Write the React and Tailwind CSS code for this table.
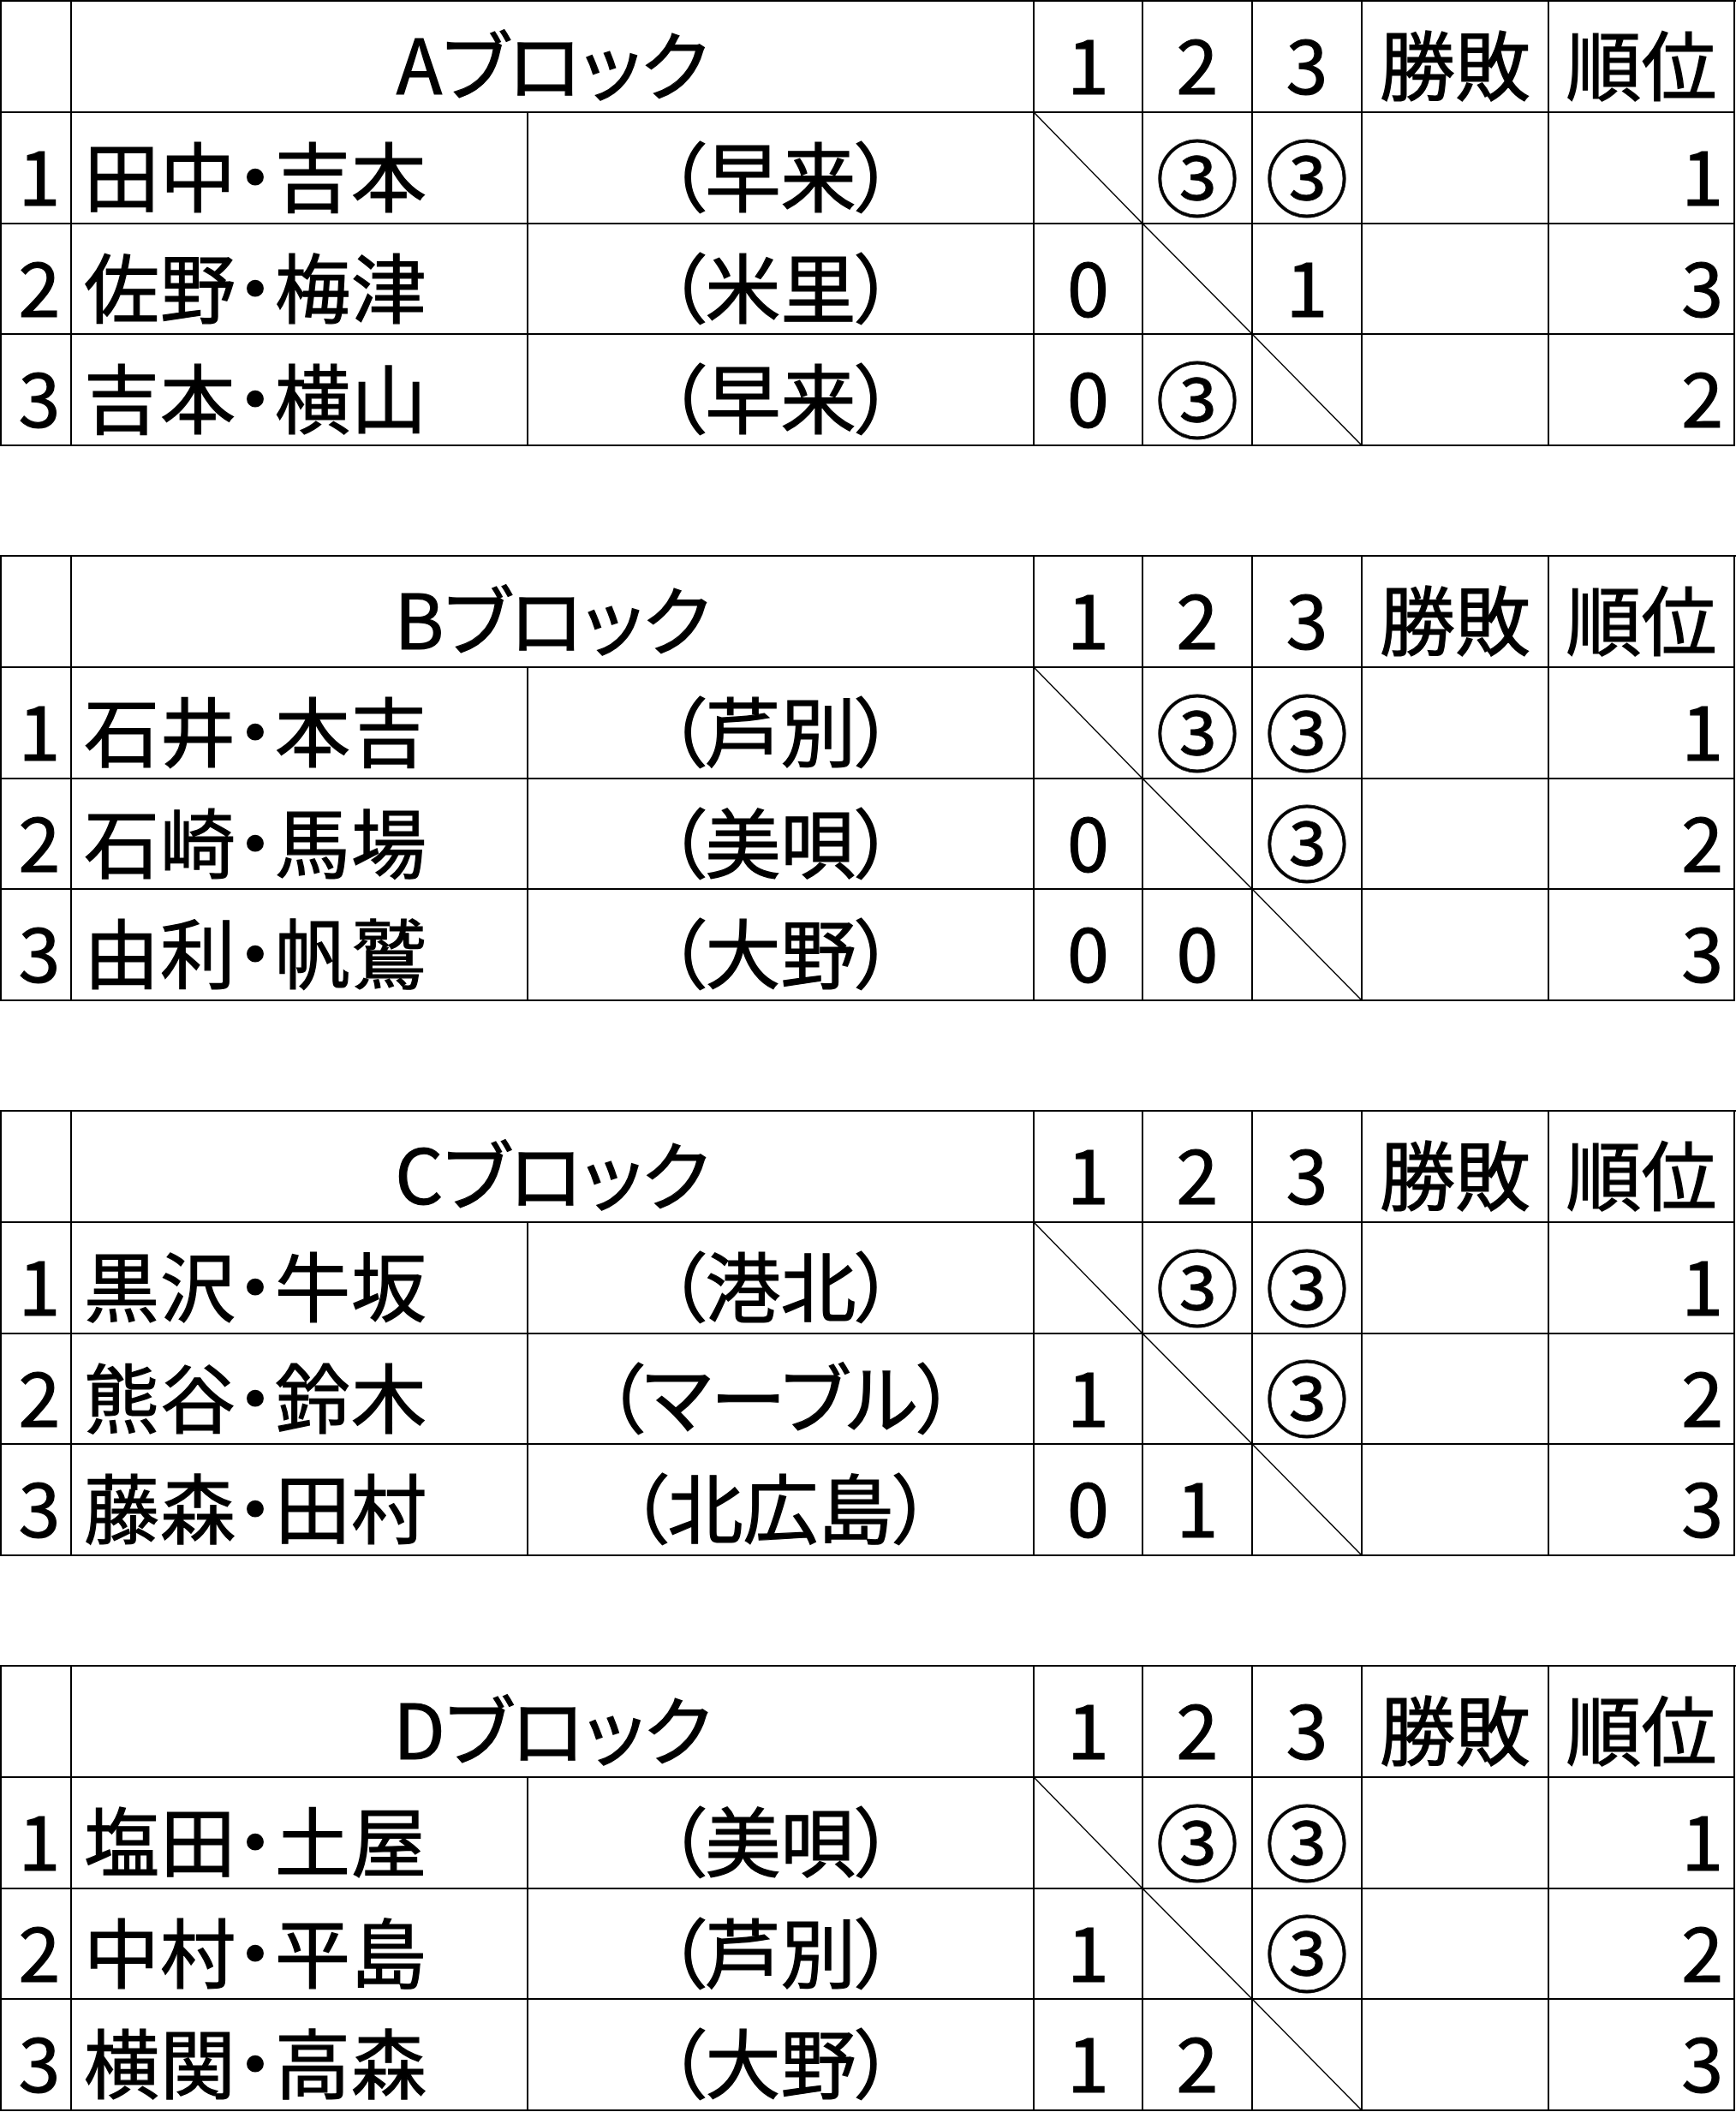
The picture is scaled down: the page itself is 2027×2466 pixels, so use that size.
const blocks = [
  {
    name: 'Aブロック',
    rows: [
      { no: '1', pair: '田中・吉本', club: '（早来）', scores: [null, '③', '③'], rank: '1' },
      { no: '2', pair: '佐野・梅津', club: '（米里）', scores: ['0', null, '1'], rank: '3' },
      { no: '3', pair: '吉本・横山', club: '（早来）', scores: ['0', '③', null], rank: '2' },
    ],
  },
  {
    name: 'Bブロック',
    rows: [
      { no: '1', pair: '石井・本吉', club: '（芦別）', scores: [null, '③', '③'], rank: '1' },
      { no: '2', pair: '石崎・馬場', club: '（美唄）', scores: ['0', null, '③'], rank: '2' },
      { no: '3', pair: '由利・帆鷲', club: '（大野）', scores: ['0', '0', null], rank: '3' },
    ],
  },
  {
    name: 'Cブロック',
    rows: [
      { no: '1', pair: '黒沢・牛坂', club: '（港北）', scores: [null, '③', '③'], rank: '1' },
      { no: '2', pair: '熊谷・鈴木', club: '（マーブル）', scores: ['1', null, '③'], rank: '2' },
      { no: '3', pair: '藤森・田村', club: '（北広島）', scores: ['0', '1', null], rank: '3' },
    ],
  },
  {
    name: 'Dブロック',
    rows: [
      { no: '1', pair: '塩田・土屋', club: '（美唄）', scores: [null, '③', '③'], rank: '1' },
      { no: '2', pair: '中村・平島', club: '（芦別）', scores: ['1', null, '③'], rank: '2' },
      { no: '3', pair: '横関・高森', club: '（大野）', scores: ['1', '2', null], rank: '3' },
    ],
  },
];

const cell = 'border-r-2 border-b-2 border-black flex items-center pt-[12px] leading-none';

function Diagonal() {
  return (
    <svg
      className="absolute -left-px -top-px -right-px -bottom-px w-[calc(100%+2px)] h-[calc(100%+2px)]"
      viewBox="0 0 100 100"
      preserveAspectRatio="none"
    >
      <line x1="0" y1="0" x2="100" y2="100" stroke="black" strokeWidth="1.5" vectorEffect="non-scaling-stroke" />
    </svg>
  );
}

function Score({ value }) {
  if (value === '③') {
    return <span className="text-[97px] leading-none [-webkit-text-stroke:0.8px_black]">{value}</span>;
  }
  return value;
}

function Block({ block }) {
  return (
    <div className="grid grid-cols-[82px_533px_591px_127px_128px_128px_218px_217px] grid-rows-[130px_130px_129px_130px] border-t-2 border-l-2 border-black">
      <div className={cell} />
      <div className={`${cell} col-span-2 justify-center`}>{block.name}</div>
      <div className={`${cell} justify-center`}>1</div>
      <div className={`${cell} justify-center`}>2</div>
      <div className={`${cell} justify-center`}>3</div>
      <div className={`${cell} justify-center`}>勝敗</div>
      <div className={`${cell} justify-center`}>順位</div>
      {block.rows.map((r, i) => (
        <div key={r.no} className="contents">
          <div className={`${cell} justify-center pl-[8px]`}>{r.no}</div>
          <div className={`${cell} pl-[14px] tracking-[1px]`}>{r.pair}</div>
          <div className={`${cell} justify-center`}>{r.club}</div>
          {r.scores.map((s, j) => (
            <div key={j} className={`${cell} justify-center relative`}>
              {j === i ? <Diagonal /> : <Score value={s} />}
            </div>
          ))}
          <div className={cell} />
          <div className={`${cell} justify-end pr-[12px]`}>{r.rank}</div>
        </div>
      ))}
    </div>
  );
}

export default function App() {
  return (
    <div className="w-[2027px] h-[2466px] bg-white text-black text-[88px] font-['Noto_Sans_CJK_JP','Noto_Sans',sans-serif] [font-feature-settings:'palt'] [-webkit-text-stroke:1.2px_black] flex flex-col gap-[127px]">
      {blocks.map((b) => (
        <Block key={b.name} block={b} />
      ))}
    </div>
  );
}
